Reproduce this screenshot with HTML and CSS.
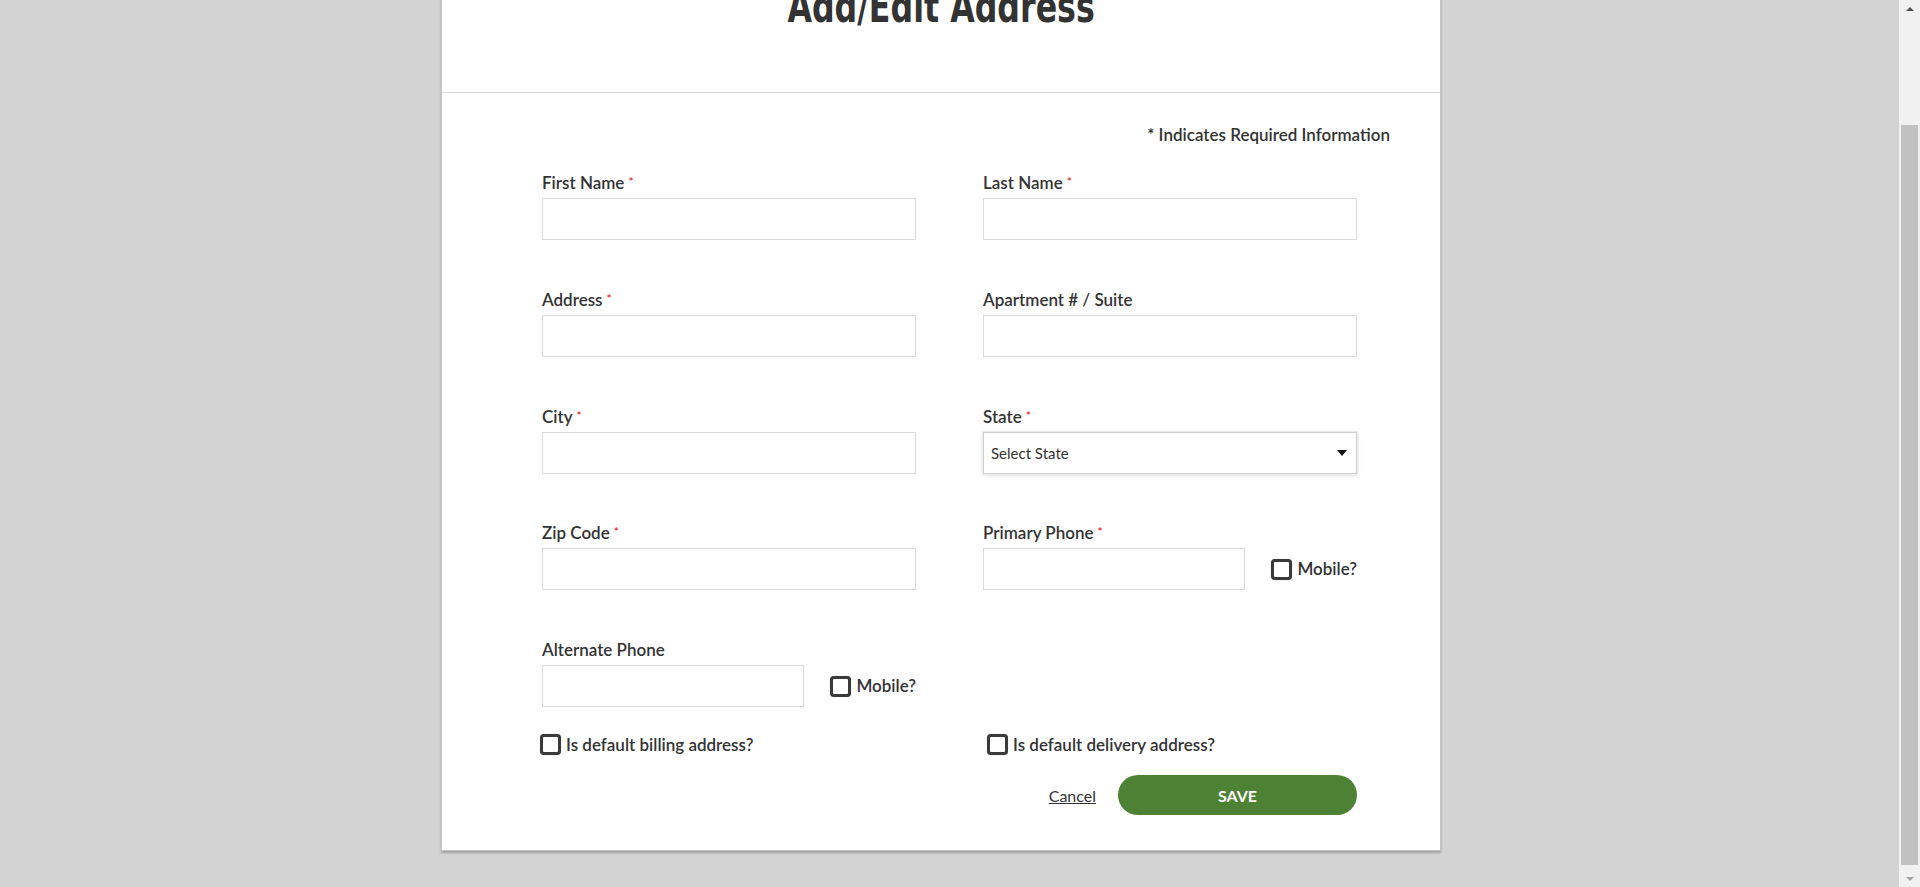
FILE: index.html
```html
<!DOCTYPE html>
<html lang="en">
<head>
<meta charset="utf-8">
<title>Add/Edit Address</title>
<link rel="stylesheet" href="styles.css">
</head>
<body>
<div class="page">
  <div class="modal">
    <div class="modal-header">
      <h1 class="title">Add/Edit Address</h1>
    </div>
    <div class="modal-body">
      <p class="required-note">* Indicates Required Information</p>
      <form class="form">
        <div class="fields">
          <div class="field">
            <label class="label">First Name<span class="star">*</span></label>
            <input class="input" type="text">
          </div>
          <div class="field">
            <label class="label">Last Name<span class="star">*</span></label>
            <input class="input" type="text">
          </div>
          <div class="field">
            <label class="label">Address<span class="star">*</span></label>
            <input class="input" type="text">
          </div>
          <div class="field">
            <label class="label">Apartment # / Suite</label>
            <input class="input" type="text">
          </div>
          <div class="field">
            <label class="label">City<span class="star">*</span></label>
            <input class="input" type="text">
          </div>
          <div class="field">
            <label class="label">State<span class="star">*</span></label>
            <div class="select">
              <span class="select-text">Select State</span>
              <span class="caret"></span>
            </div>
          </div>
          <div class="field">
            <label class="label">Zip Code<span class="star">*</span></label>
            <input class="input" type="text">
          </div>
          <div class="field">
            <label class="label">Primary Phone<span class="star">*</span></label>
            <div class="phone-row">
              <input class="input phone" type="text">
              <label class="check"><input class="box" type="checkbox"><span>Mobile?</span></label>
            </div>
          </div>
          <div class="field">
            <label class="label">Alternate Phone</label>
            <div class="phone-row">
              <input class="input phone" type="text">
              <label class="check"><input class="box" type="checkbox"><span>Mobile?</span></label>
            </div>
          </div>
        </div>
        <div class="defaults">
          <label class="check default-left"><input class="box" type="checkbox"><span>Is default billing address?</span></label>
          <label class="check default-right"><input class="box" type="checkbox"><span>Is default delivery address?</span></label>
        </div>
        <div class="actions">
          <a class="cancel" href="#">Cancel</a>
          <button class="save" type="button">SAVE</button>
        </div>
      </form>
    </div>
  </div>
</div>
<div class="scrollbar" aria-hidden="true">
  <div class="sb-btn"><span class="sb-up"></span></div>
  <div class="sb-track"><div class="sb-thumb"></div></div>
  <div class="sb-btn"><span class="sb-down"></span></div>
</div>
<script src="script.js"></script>
</body>
</html>
```

FILE: styles.css
```css
html, body {
  margin: 0;
  padding: 0;
}
body {
  background: #d3d3d3;
  font-family: Lato, "Noto Sans", sans-serif;
  color: #333;
}
.page {
  padding: 31.5px 0 43px 441px;
}
.modal {
  width: 998px;
  background: #fff;
  border: 1px solid #c4c4c4;
  box-shadow: 0 2px 2px rgba(0, 0, 0, 0.25);
}
.modal-header {
  height: 189.5px;
  border-bottom: 1px solid #d8d8d8;
  box-sizing: border-box;
  padding-top: 81px;
  text-align: center;
}
.title {
  display: inline-block;
  margin: 0;
  font-family: "DejaVu Sans Condensed", "DejaVu Sans", sans-serif;
  font-stretch: condensed;
  font-weight: 700;
  font-size: 44px;
  line-height: 44px;
  color: #333;
  transform: scaleX(0.8);
}
.modal-body {
  padding: 32px 50px 35px 50px;
}
.required-note {
  margin: 0;
  text-align: right;
  font-size: 17px;
  line-height: 20px;
  font-weight: 600;
}
.form {
  margin: 28px 33px 0 50px;
}
.fields {
  display: grid;
  grid-template-columns: 374px 374px;
  column-gap: 67px;
  row-gap: 49.75px;
}
.field {
  display: flex;
  flex-direction: column;
}
.label {
  font-size: 17px;
  line-height: 20px;
  font-weight: 600;
  margin-bottom: 5px;
}
.star {
  color: #e2231a;
  font-size: 12px;
  line-height: 0;
  margin-left: 4px;
  vertical-align: 3px;
}
.input {
  box-sizing: border-box;
  height: 42px;
  width: 100%;
  margin: 0;
  border: 1px solid #d9d9d9;
  border-radius: 0;
  background: #fff;
  font: inherit;
}
.select {
  box-sizing: border-box;
  height: 42px;
  display: flex;
  align-items: center;
  justify-content: space-between;
  padding: 0 9px 0 7px;
  border: 1px solid #cfcfcf;
  box-shadow: 0 0 0 1px #ececec, 0 1px 4px rgba(0, 0, 0, 0.18);
  background: #fff;
}
.select-text {
  font-size: 15px;
  color: #333;
}
.caret {
  width: 0;
  height: 0;
  border-left: 5px solid transparent;
  border-right: 5px solid transparent;
  border-top: 6px solid #111;
}
.phone-row {
  display: flex;
  align-items: center;
  justify-content: space-between;
}
.input.phone {
  width: 262px;
}
.check {
  display: flex;
  align-items: center;
  gap: 5px;
  font-size: 17px;
  line-height: 20px;
  font-weight: 600;
  color: #333;
}
.box {
  appearance: none;
  -webkit-appearance: none;
  box-sizing: border-box;
  width: 21px;
  height: 21px;
  margin: 0;
  border: 3px solid #3a3a3a;
  border-radius: 4px;
  background: #fff;
  box-shadow: 0 0 1px rgba(0, 0, 0, 0.4);
}
.defaults {
  display: grid;
  grid-template-columns: 374px 374px;
  column-gap: 67px;
  margin-top: 27px;
}
.default-left {
  margin-left: -2px;
}
.default-right {
  margin-left: 4px;
}
.actions {
  display: flex;
  justify-content: flex-end;
  align-items: center;
  gap: 22px;
  margin-top: 20px;
}
.cancel {
  color: #333;
  font-size: 16px;
  text-decoration: underline;
}
.save {
  width: 239px;
  height: 40px;
  border: none;
  border-radius: 20px;
  background: #4d8234;
  color: #fff;
  font-family: Lato, "Noto Sans", sans-serif;
  font-weight: 700;
  font-size: 16px;
}
.scrollbar {
  position: fixed;
  top: 0;
  right: 0;
  width: 21px;
  height: 100%;
  background: #f1f1f1;
  display: flex;
  flex-direction: column;
}
.sb-btn {
  height: 17px;
  display: flex;
  align-items: center;
  justify-content: center;
}
.sb-up {
  width: 0;
  height: 0;
  border-left: 4px solid transparent;
  border-right: 4px solid transparent;
  border-bottom: 4px solid #505050;
}
.sb-down {
  width: 0;
  height: 0;
  border-left: 4px solid transparent;
  border-right: 4px solid transparent;
  border-top: 4px solid #a3a3a3;
}
.sb-track {
  flex: 1;
  padding: 108px 2px 0 2px;
}
.sb-thumb {
  height: 740px;
  background: #c1c1c1;
}
```

FILE: script.js
```js
window.scrollTo(0, 129);
```
